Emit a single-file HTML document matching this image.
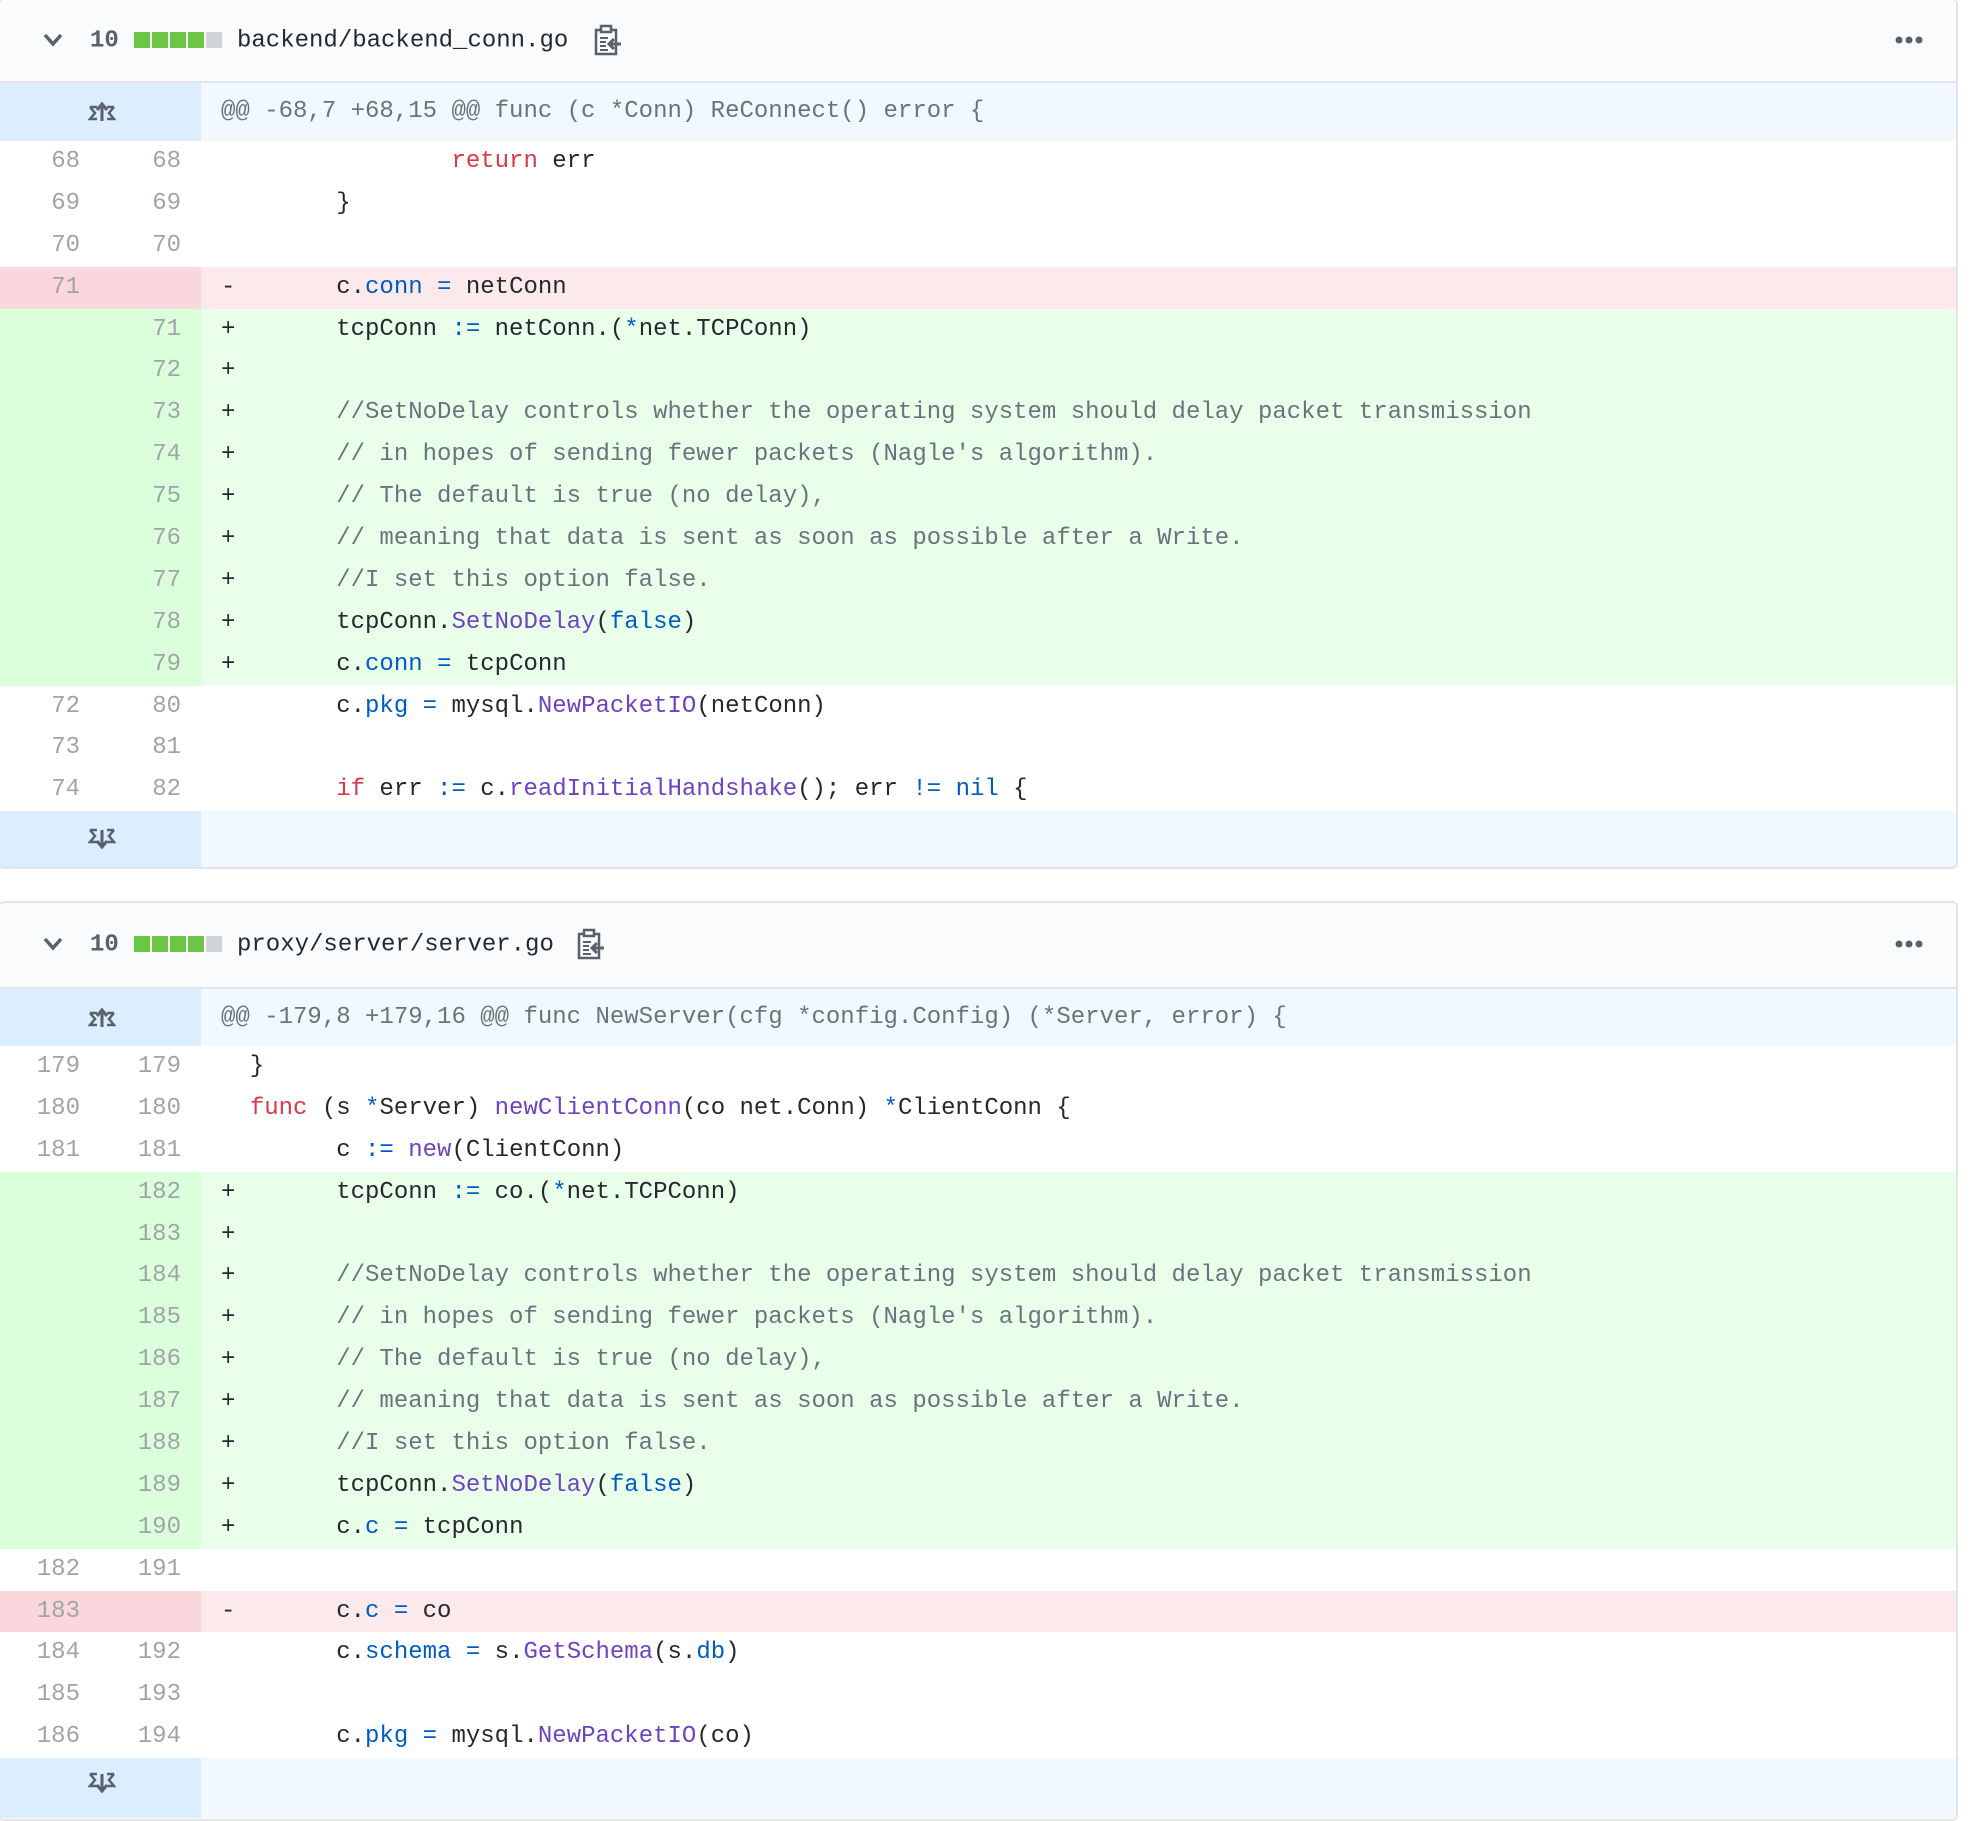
<!DOCTYPE html>
<html><head><meta charset="utf-8">
<style>
*{margin:0;padding:0;box-sizing:border-box}
body{width:1970px;height:1812px;background:#fff;overflow:hidden;position:relative;font-family:"Liberation Mono","DejaVu Sans Mono",monospace;color:#24292e}
.box{position:absolute;left:-2px;width:1960px;border:2px solid #e1e4e8;border-radius:6px;overflow:hidden;background:#fff}
.hdr{position:relative;background:#fafbfc;border-bottom:2px solid #e1e4e8}
.chev{position:absolute;left:43px;top:50%;margin-top:-8px}
.num{position:absolute;left:90px;top:50%;transform:translateY(-50%);font-weight:bold;font-size:24px;color:#586069}
.bars{position:absolute;left:134px;top:50%;margin-top:-9px;display:flex;gap:2px}
.bars i{display:block;width:16px;height:16px;background:#6cc644}
.bars i.g{background:#d1d5da}
.fn{position:absolute;left:237px;top:50%;transform:translateY(-50%);font-size:24px;color:#24292e}
.clip{position:absolute;top:50%;margin-top:-17px}
.dots{position:absolute;left:1895px;top:50%;margin-top:-5px}
.row{display:flex;height:41.9px;line-height:41.9px;font-size:24px}
.ln{width:100px;flex:none;text-align:right;padding-right:20px;color:#a0a4a8;font-size:24px}
.ln2{width:101px;padding-right:20px}
.code{flex:1;padding-left:20px;white-space:pre;tab-size:8;-moz-tab-size:8}
.hunk{display:flex;height:58px;line-height:58px;font-size:24px}
.hunk .g{width:201px;flex:none;background:#dbedff;position:relative}
.hunk .c{flex:1;background:#f1f8ff;color:#6a737d;padding-left:20px;white-space:pre}
.del .ln{background:#f9d7dc}.del .code{background:#fbe9eb}
.add .ln{background:#dbffdb}.add .code{background:#eaffea}
.k{color:#d73a49}.b{color:#005cc5}.p{color:#6f42c1}.cm{color:#6a737d}
.ico{position:absolute;left:88px;top:50%;margin-top:-11px}
</style></head><body>

<div class="box" style="top:-2px;height:871px">
  <div class="hdr" style="height:83px">
    <svg class="chev" width="20" height="14" viewBox="0 0 20 14"><path d="M2 2 L10 11 L18 2" fill="none" stroke="#586069" stroke-width="3.5"/></svg>
    <div class="num">10</div>
    <div class="bars"><i></i><i></i><i></i><i></i><i class="g"></i></div>
    <div class="fn">backend/backend_conn.go</div>
    <svg class="clip" style="left:594px" width="28" height="32" viewBox="0 0 28 32"><rect x="2" y="6" width="20" height="24" fill="none" stroke="#586069" stroke-width="2.5"/><rect x="7" y="2" width="10" height="6" fill="#fafbfc" stroke="#586069" stroke-width="2.5"/><path d="M6 14h8M6 18h6M6 22h6M6 26h8" stroke="#586069" stroke-width="2"/><path d="M27 20H16M20 15l-5 5 5 5" fill="none" stroke="#586069" stroke-width="3"/></svg>
    <svg class="dots" width="28" height="8"><circle cx="4" cy="4" r="3.5" fill="#586069"/><circle cx="14" cy="4" r="3.5" fill="#586069"/><circle cx="24" cy="4" r="3.5" fill="#586069"/></svg>
  </div>
  <div class="hunk"><div class="g"><svg class="ico" width="28" height="22" viewBox="0 0 28 22"><path d="M2 6h7M2 6l5 6-5 6h7" fill="none" stroke="#586069" stroke-width="2.5"/><path d="M26 6h-7M26 6l-5 6 5 6h-7" fill="none" stroke="#586069" stroke-width="2.5"/><path d="M14 20V6M9 9l5-6 5 6" fill="none" stroke="#586069" stroke-width="3"/></svg></div><div class="c">@@ -68,7 +68,15 @@ func (c *Conn) ReConnect() error {</div></div>
  <div class="row"><div class="ln">68</div><div class="ln ln2">68</div><div class="code">  		<span class="k">return</span> err</div></div>
  <div class="row"><div class="ln">69</div><div class="ln ln2">69</div><div class="code">  	}</div></div>
  <div class="row"><div class="ln">70</div><div class="ln ln2">70</div><div class="code"> </div></div>
  <div class="row del"><div class="ln">71</div><div class="ln ln2"></div><div class="code">- 	c.<span class="b">conn</span> <span class="b">=</span> netConn</div></div>
  <div class="row add"><div class="ln"></div><div class="ln ln2">71</div><div class="code">+ 	tcpConn <span class="b">:=</span> netConn.(<span class="b">*</span>net.TCPConn)</div></div>
  <div class="row add"><div class="ln"></div><div class="ln ln2">72</div><div class="code">+</div></div>
  <div class="row add"><div class="ln"></div><div class="ln ln2">73</div><div class="code">+ 	<span class="cm">//SetNoDelay controls whether the operating system should delay packet transmission</span></div></div>
  <div class="row add"><div class="ln"></div><div class="ln ln2">74</div><div class="code">+ 	<span class="cm">// in hopes of sending fewer packets (Nagle's algorithm).</span></div></div>
  <div class="row add"><div class="ln"></div><div class="ln ln2">75</div><div class="code">+ 	<span class="cm">// The default is true (no delay),</span></div></div>
  <div class="row add"><div class="ln"></div><div class="ln ln2">76</div><div class="code">+ 	<span class="cm">// meaning that data is sent as soon as possible after a Write.</span></div></div>
  <div class="row add"><div class="ln"></div><div class="ln ln2">77</div><div class="code">+ 	<span class="cm">//I set this option false.</span></div></div>
  <div class="row add"><div class="ln"></div><div class="ln ln2">78</div><div class="code">+ 	tcpConn.<span class="p">SetNoDelay</span>(<span class="b">false</span>)</div></div>
  <div class="row add"><div class="ln"></div><div class="ln ln2">79</div><div class="code">+ 	c.<span class="b">conn</span> <span class="b">=</span> tcpConn</div></div>
  <div class="row"><div class="ln">72</div><div class="ln ln2">80</div><div class="code">  	c.<span class="b">pkg</span> <span class="b">=</span> mysql.<span class="p">NewPacketIO</span>(netConn)</div></div>
  <div class="row"><div class="ln">73</div><div class="ln ln2">81</div><div class="code"> </div></div>
  <div class="row"><div class="ln">74</div><div class="ln ln2">82</div><div class="code">  	<span class="k">if</span> err <span class="b">:=</span> c.<span class="p">readInitialHandshake</span>(); err <span class="b">!=</span> <span class="b">nil</span> {</div></div>
  <div class="hunk" style="height:56px"><div class="g"><svg class="ico" width="28" height="22" viewBox="0 0 28 22"><path d="M2 2h7M2 2l5 6-5 6h7" fill="none" stroke="#586069" stroke-width="2.5"/><path d="M26 2h-7M26 2l-5 6 5 6h-7" fill="none" stroke="#586069" stroke-width="2.5"/><path d="M14 2v16M9 13l5 6 5-6" fill="none" stroke="#586069" stroke-width="3"/></svg></div><div class="c"></div></div>
</div>

<div class="box" style="top:901px;height:920px">
  <div class="hdr" style="height:86px">
    <svg class="chev" width="20" height="14" viewBox="0 0 20 14"><path d="M2 2 L10 11 L18 2" fill="none" stroke="#586069" stroke-width="3.5"/></svg>
    <div class="num">10</div>
    <div class="bars"><i></i><i></i><i></i><i></i><i class="g"></i></div>
    <div class="fn">proxy/server/server.go</div>
    <svg class="clip" style="left:577px" width="28" height="32" viewBox="0 0 28 32"><rect x="2" y="6" width="20" height="24" fill="none" stroke="#586069" stroke-width="2.5"/><rect x="7" y="2" width="10" height="6" fill="#fafbfc" stroke="#586069" stroke-width="2.5"/><path d="M6 14h8M6 18h6M6 22h6M6 26h8" stroke="#586069" stroke-width="2"/><path d="M27 20H16M20 15l-5 5 5 5" fill="none" stroke="#586069" stroke-width="3"/></svg>
    <svg class="dots" width="28" height="8"><circle cx="4" cy="4" r="3.5" fill="#586069"/><circle cx="14" cy="4" r="3.5" fill="#586069"/><circle cx="24" cy="4" r="3.5" fill="#586069"/></svg>
  </div>
  <div class="hunk" style="height:57px;line-height:57px"><div class="g"><svg class="ico" width="28" height="22" viewBox="0 0 28 22"><path d="M2 6h7M2 6l5 6-5 6h7" fill="none" stroke="#586069" stroke-width="2.5"/><path d="M26 6h-7M26 6l-5 6 5 6h-7" fill="none" stroke="#586069" stroke-width="2.5"/><path d="M14 20V6M9 9l5-6 5 6" fill="none" stroke="#586069" stroke-width="3"/></svg></div><div class="c">@@ -179,8 +179,16 @@ func NewServer(cfg *config.Config) (*Server, error) {</div></div>
  <div class="row"><div class="ln">179</div><div class="ln ln2">179</div><div class="code">  }</div></div>
  <div class="row"><div class="ln">180</div><div class="ln ln2">180</div><div class="code">  <span class="k">func</span> (s <span class="b">*</span>Server) <span class="p">newClientConn</span>(co net.Conn) <span class="b">*</span>ClientConn {</div></div>
  <div class="row"><div class="ln">181</div><div class="ln ln2">181</div><div class="code">  	c <span class="b">:=</span> <span class="p">new</span>(ClientConn)</div></div>
  <div class="row add"><div class="ln"></div><div class="ln ln2">182</div><div class="code">+ 	tcpConn <span class="b">:=</span> co.(<span class="b">*</span>net.TCPConn)</div></div>
  <div class="row add"><div class="ln"></div><div class="ln ln2">183</div><div class="code">+</div></div>
  <div class="row add"><div class="ln"></div><div class="ln ln2">184</div><div class="code">+ 	<span class="cm">//SetNoDelay controls whether the operating system should delay packet transmission</span></div></div>
  <div class="row add"><div class="ln"></div><div class="ln ln2">185</div><div class="code">+ 	<span class="cm">// in hopes of sending fewer packets (Nagle's algorithm).</span></div></div>
  <div class="row add"><div class="ln"></div><div class="ln ln2">186</div><div class="code">+ 	<span class="cm">// The default is true (no delay),</span></div></div>
  <div class="row add"><div class="ln"></div><div class="ln ln2">187</div><div class="code">+ 	<span class="cm">// meaning that data is sent as soon as possible after a Write.</span></div></div>
  <div class="row add"><div class="ln"></div><div class="ln ln2">188</div><div class="code">+ 	<span class="cm">//I set this option false.</span></div></div>
  <div class="row add"><div class="ln"></div><div class="ln ln2">189</div><div class="code">+ 	tcpConn.<span class="p">SetNoDelay</span>(<span class="b">false</span>)</div></div>
  <div class="row add"><div class="ln"></div><div class="ln ln2">190</div><div class="code">+ 	c.<span class="b">c</span> <span class="b">=</span> tcpConn</div></div>
  <div class="row"><div class="ln">182</div><div class="ln ln2">191</div><div class="code"> </div></div>
  <div class="row del"><div class="ln">183</div><div class="ln ln2"></div><div class="code">- 	c.<span class="b">c</span> <span class="b">=</span> co</div></div>
  <div class="row"><div class="ln">184</div><div class="ln ln2">192</div><div class="code">  	c.<span class="b">schema</span> <span class="b">=</span> s.<span class="p">GetSchema</span>(s.<span class="b">db</span>)</div></div>
  <div class="row"><div class="ln">185</div><div class="ln ln2">193</div><div class="code"> </div></div>
  <div class="row"><div class="ln">186</div><div class="ln ln2">194</div><div class="code">  	c.<span class="b">pkg</span> <span class="b">=</span> mysql.<span class="p">NewPacketIO</span>(co)</div></div>
  <div class="hunk" style="height:60px"><div class="g"><svg class="ico" style="margin-top:-16px" width="28" height="22" viewBox="0 0 28 22"><path d="M2 2h7M2 2l5 6-5 6h7" fill="none" stroke="#586069" stroke-width="2.5"/><path d="M26 2h-7M26 2l-5 6 5 6h-7" fill="none" stroke="#586069" stroke-width="2.5"/><path d="M14 2v16M9 13l5 6 5-6" fill="none" stroke="#586069" stroke-width="3"/></svg></div><div class="c"></div></div>
</div>
</body></html>
